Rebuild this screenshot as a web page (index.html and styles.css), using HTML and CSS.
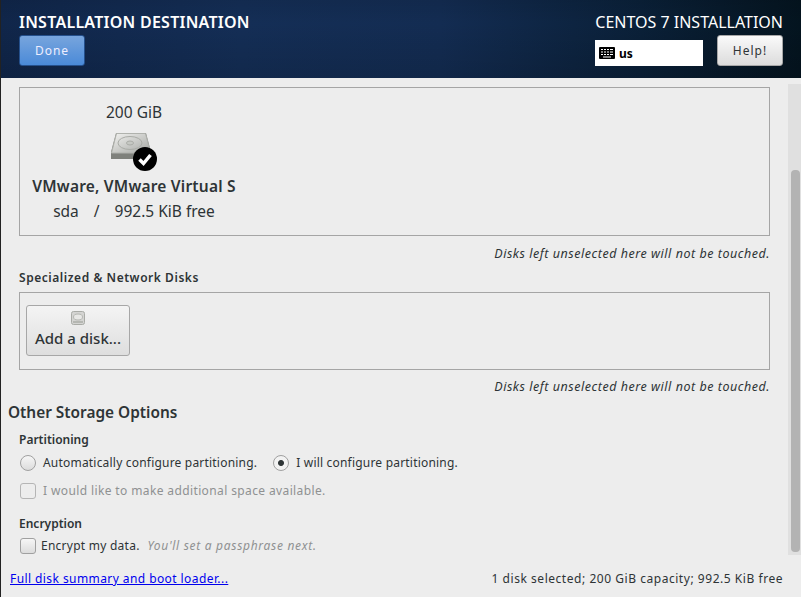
FILE: index.html
```html
<!DOCTYPE html>
<html lang="en">
<head>
  <meta charset="UTF-8">
  <title>Installation Destination</title>
  <link rel="stylesheet" href="styles.css">
</head>
<body>

  <header class="topbar">
    <div class="topbar-left">
      <h1 class="spoke-title">INSTALLATION DESTINATION</h1>
      <button class="done-btn">Done</button>
    </div>
    <div class="topbar-right">
      <div class="product-title">CENTOS 7 INSTALLATION</div>
      <div class="topbar-controls">
        <div class="layout-box">
          <svg class="kbd-icon" width="16" height="12" viewBox="0 0 16 12">
            <rect x="0" y="0" width="16" height="12" rx="1" fill="#000"/>
            <path d="M2 2.500h2M5 2.500h2M8 2.500h2M11 2.500h3M2 5h2M5 5h2M8 5h2M11 5h3M2 7.500h2M5 7.500h2M8 7.500h2M11 7.500h3M4 10h8" stroke="#fff" stroke-width="1" fill="none"/>
          </svg>
          <span class="layout-name">us</span>
        </div>
        <button class="help-btn">Help!</button>
      </div>
    </div>
  </header>

  <main class="content">
    <section class="disk-panel">
      <div class="disk-card">
        <div class="disk-size">200 GiB</div>
        <svg class="disk-icon" width="50" height="40" viewBox="0 0 50 40">
          <defs>
            <linearGradient id="hdd" x1="0" y1="0" x2="1" y2="1">
              <stop offset="0" stop-color="#f2f2f0"/>
              <stop offset="1" stop-color="#a4a6a2"/>
            </linearGradient>
          </defs>
          <path d="M6 1H36L41 20V27H1V20Z" fill="#7f817c"/>
          <path d="M6.500 1.500H35.500L40.500 21H1.500Z" fill="url(#hdd)" stroke="#b0b2ad"/>
          <ellipse cx="20" cy="11" rx="12" ry="6.500" fill="none" stroke="#a9aba6"/>
          <ellipse cx="20" cy="11" rx="3.500" ry="2" fill="#c6c8c3" stroke="#a9aba6"/>
          <circle cx="35" cy="27" r="12" fill="#000"/>
          <path d="M29.500 27.500L33.500 31.500L40.500 23" fill="none" stroke="#fff" stroke-width="3.500"/>
        </svg>
        <div class="disk-name">VMware, VMware Virtual S</div>
        <div class="disk-info"><span>sda</span><span>/</span><span>992.5 KiB free</span></div>
      </div>
    </section>
    <p class="hint">Disks left unselected here will not be touched.</p>

    <h3 class="sub-head network-head">Specialized &amp; Network Disks</h3>
    <section class="network-panel">
      <button class="add-disk">
        <svg width="14" height="14" viewBox="0 0 14 14">
          <rect x="0.500" y="0.500" width="13" height="13" rx="2" fill="#d4d4d2" stroke="#a9aba6"/>
          <ellipse cx="7" cy="6" rx="4.500" ry="3" fill="#e8e8e6" stroke="#b5b7b2"/>
          <rect x="2" y="10" width="10" height="2" fill="#b5b7b2"/>
        </svg>
        <span>Add a disk...</span>
      </button>
    </section>
    <p class="hint hint-second">Disks left unselected here will not be touched.</p>

    <h2 class="options-head">Other Storage Options</h2>
    <div class="options">
      <h3 class="sub-head">Partitioning</h3>
      <div class="radio-row">
        <label class="choice"><span class="radio"></span>Automatically configure partitioning.</label>
        <label class="choice"><span class="radio radio-on"></span>I will configure partitioning.</label>
      </div>
      <label class="choice choice-off"><span class="check check-off"></span>I would like to make additional space available.</label>
      <h3 class="sub-head encrypt-head">Encryption</h3>
      <label class="choice encrypt-row"><span class="check"></span>Encrypt my data.<em>You'll set a passphrase next.</em></label>
    </div>
  </main>

  <footer class="summary">
    <a class="summary-link" href="#">Full disk summary and boot loader...</a>
    <span class="summary-text">1 disk selected; 200 GiB capacity; 992.5 KiB free</span>
  </footer>

  <div class="scroll-track"><div class="scroll-thumb"></div></div>

</body>
</html>
```

FILE: styles.css
```css
* {
  box-sizing: border-box;
}

html, body {
  height: 100%;
}

body {
  margin: 0;
  font-family: "Noto Sans", "Open Sans", sans-serif;
  font-size: 12px;
  color: #2e3436;
  background: #ededed;
  border-left: 1px solid #222;
  overflow: hidden;
  position: relative;
  display: flex;
  flex-direction: column;
}

/* Top bar */
.topbar {
  height: 78px;
  margin-left: -1px;
  padding: 13px 18px 0 19px;
  display: flex;
  justify-content: space-between;
  background:
    linear-gradient(rgba(0, 0, 0, 0.08), rgba(0, 0, 0, 0) 30%, rgba(0, 0, 0, 0.12)),
    linear-gradient(90deg, #10264a 0%, #142e56 30%, #132c52 55%, #0a2038 80%, #04141f 100%);
  flex: none;
}

.spoke-title {
  margin: 0 0 4px;
  font-size: 16px;
  line-height: 18px;
  font-weight: 600;
  color: #fff;
  letter-spacing: 0.25px;
  white-space: nowrap;
}

.done-btn {
  display: block;
  width: 66px;
  height: 31px;
  font: inherit;
  font-size: 12px;
  letter-spacing: 1px;
  color: #eef;
  border: 1px solid #25508c;
  border-radius: 3px;
  background: linear-gradient(#78a5dd, #4a8ad8);
}

.topbar-right {
  width: 188px;
}

.product-title {
  font-size: 16px;
  line-height: 18px;
  color: #fff;
  text-align: right;
  white-space: nowrap;
}

.topbar-controls {
  display: flex;
  justify-content: space-between;
  margin-top: 4px;
  align-items: flex-start;
}

.layout-box {
  width: 108px;
  height: 26px;
  margin-top: 5px;
  padding-left: 4px;
  background: #fff;
  display: flex;
  align-items: center;
  gap: 4px;
  color: #000;
}

.layout-name {
  font-size: 12px;
  font-weight: 700;
}

.help-btn {
  width: 66px;
  height: 31px;
  font: inherit;
  font-size: 12px;
  letter-spacing: 1px;
  color: #2e3436;
  border: 1px solid #a7a7a7;
  border-radius: 3px;
  background: linear-gradient(#fafafa, #dcdcdc);
}

/* Scrolled content */
.content {
  flex: 1;
  padding: 9px 31px 0 6px;
  min-height: 0;
}

.disk-panel {
  margin-left: 12px;
  height: 149px;
  border: 1px solid #a5a5a5;
  padding-left: 12px;
}

.disk-card {
  width: 204px;
  text-align: center;
}

.disk-size {
  margin-top: 14px;
  font-size: 15.500px;
  line-height: 20px;
}

.disk-icon {
  display: block;
  margin: 10px 0 0 78px;
}

.disk-name {
  margin-top: 4px;
  font-size: 15.500px;
  line-height: 20px;
  font-weight: 600;
  letter-spacing: 0.2px;
  white-space: nowrap;
}

.disk-info {
  margin-top: 5px;
  font-size: 15.500px;
  line-height: 20px;
  display: flex;
  justify-content: center;
  gap: 15px;
}

.hint {
  margin: 10px 0 0;
  font-size: 12.500px;
  line-height: 16px;
  font-style: italic;
  text-align: right;
  letter-spacing: 0.53px;
}

.sub-head {
  margin: 0;
  font-size: 12px;
  line-height: 16px;
  font-weight: 600;
}

.network-head {
  margin: 8px 0 0 12px;
  letter-spacing: 0.55px;
}

.network-panel {
  margin: 6px 0 0 12px;
  height: 78px;
  border: 1px solid #a5a5a5;
  padding: 12px 6px;
}

.add-disk {
  width: 104px;
  height: 51px;
  padding: 5px 0 0;
  font: inherit;
  font-size: 15px;
  font-weight: 500;
  color: #2e3436;
  border: 1px solid #a7a7a7;
  border-radius: 3px;
  background: linear-gradient(#f4f4f4, #dedede);
  display: flex;
  flex-direction: column;
  align-items: center;
  gap: 3px;
}

.hint-second {
  margin-top: 9px;
}

.options-head {
  margin: 8px 0 0 1px;
  font-size: 15.400px;
  line-height: 20px;
  font-weight: 600;
}

.options {
  margin: 9px 0 0 12px;
}

.radio-row {
  display: flex;
  gap: 15px;
  margin-top: 6px;
}

.choice {
  display: flex;
  align-items: center;
  font-size: 12px;
  line-height: 18px;
  letter-spacing: 0.2px;
  white-space: nowrap;
}

.radio, .check {
  width: 16px;
  height: 16px;
  margin: 0 7px 0 1px;
  border: 1px solid #a0a0a0;
  background: linear-gradient(#f6f6f6, #dcdcdc);
  flex: none;
}

.radio {
  border-radius: 50%;
}

.radio-on {
  background: radial-gradient(circle, #2e3436 0 2.500px, #f2f2f2 3.500px);
}

.check {
  border-radius: 3px;
  margin-right: 5px;
}

.check-off {
  margin-right: 7px;
  background: #ededed;
  border-color: #b5b5b5;
}

.choice-off {
  margin-top: 10px;
  color: #8f9192;
  letter-spacing: 0.38px;
}

.encrypt-head {
  margin-top: 16px;
}

.encrypt-row {
  margin-top: 5px;
  letter-spacing: 0.25px;
}

.encrypt-row em {
  margin-left: 8px;
  color: #8f9192;
  letter-spacing: 0.7px;
}

/* Bottom line */
.summary {
  flex: none;
  height: 42px;
  padding: 15px 18px 0 9px;
  display: flex;
  justify-content: space-between;
  font-size: 12px;
  line-height: 18px;
}

.summary-link {
  color: #0000ee;
  letter-spacing: 0.42px;
}

.summary-text {
  letter-spacing: 0.54px;
}

/* Scrollbar lies over the content */
.scroll-track {
  position: absolute;
  top: 84px;
  right: 0;
  bottom: 42px;
  width: 13px;
  padding: 86px 1px 3px 3px;
  background: #e0e0e0;
}

.scroll-thumb {
  height: 100%;
  border-radius: 4px;
  background: #b3b3b3;
}
```
